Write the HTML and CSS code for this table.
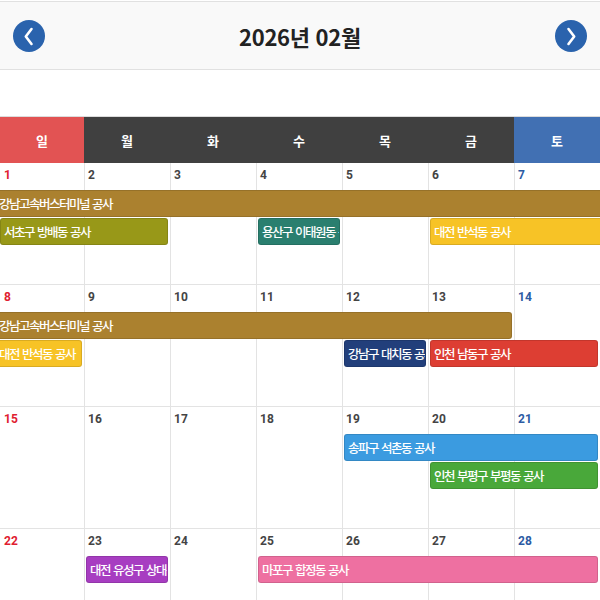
FILE: index.html
```html
<!DOCTYPE html>
<html lang="ko">
<head>
<meta charset="utf-8">
<link rel="stylesheet" href="styles.css">
</head>
<body>
<header class="topbar">
  <button class="nav-btn" aria-label="이전 달">
    <svg width="32" height="32" viewBox="0 0 32 32"><circle cx="16" cy="16" r="16" fill="#2a63ad"/><path d="M18.5 9 L12.8 16.5 L18.5 24" fill="none" stroke="#fff" stroke-width="2.6" stroke-linecap="round" stroke-linejoin="round"/></svg>
  </button>
  <h1 class="title">2026년 02월</h1>
  <button class="nav-btn" aria-label="다음 달">
    <svg width="32" height="32" viewBox="0 0 32 32"><circle cx="16" cy="16" r="16" fill="#2a63ad"/><path d="M13.5 9 L19.2 16.5 L13.5 24" fill="none" stroke="#fff" stroke-width="2.6" stroke-linecap="round" stroke-linejoin="round"/></svg>
  </button>
</header>

<section class="calendar">
  <div class="dow">
    <div class="dow-cell sun">일</div>
    <div class="dow-cell">월</div>
    <div class="dow-cell">화</div>
    <div class="dow-cell">수</div>
    <div class="dow-cell">목</div>
    <div class="dow-cell">금</div>
    <div class="dow-cell sat">토</div>
  </div>

  <div class="week">
    <div class="cells">
      <div class="cell"><span class="num sun">1</span></div>
      <div class="cell"><span class="num">2</span></div>
      <div class="cell"><span class="num">3</span></div>
      <div class="cell"><span class="num">4</span></div>
      <div class="cell"><span class="num">5</span></div>
      <div class="cell"><span class="num">6</span></div>
      <div class="cell"><span class="num sat">7</span></div>
    </div>
    <div class="events">
      <div class="ev gold cont-l cont-r c1-8 r1">강남고속버스터미널 공사</div>
      <div class="ev olive c1-3 r2">서초구 방배동 공사</div>
      <div class="ev teal c4-5 r2">용산구 이태원동 공사</div>
      <div class="ev yellow cont-r c6-8 r2">대전 반석동 공사</div>
    </div>
  </div>

  <div class="week">
    <div class="cells">
      <div class="cell"><span class="num sun">8</span></div>
      <div class="cell"><span class="num">9</span></div>
      <div class="cell"><span class="num">10</span></div>
      <div class="cell"><span class="num">11</span></div>
      <div class="cell"><span class="num">12</span></div>
      <div class="cell"><span class="num">13</span></div>
      <div class="cell"><span class="num sat">14</span></div>
    </div>
    <div class="events">
      <div class="ev gold cont-l c1-7 r1">강남고속버스터미널 공사</div>
      <div class="ev yellow cont-l c1-2 r2">대전 반석동 공사</div>
      <div class="ev navy c5-6 r2">강남구 대치동 공사</div>
      <div class="ev red c6-8 r2">인천 남동구 공사</div>
    </div>
  </div>

  <div class="week">
    <div class="cells">
      <div class="cell"><span class="num sun">15</span></div>
      <div class="cell"><span class="num">16</span></div>
      <div class="cell"><span class="num">17</span></div>
      <div class="cell"><span class="num">18</span></div>
      <div class="cell"><span class="num">19</span></div>
      <div class="cell"><span class="num">20</span></div>
      <div class="cell"><span class="num sat">21</span></div>
    </div>
    <div class="events">
      <div class="ev blue c5-8 r1">송파구 석촌동 공사</div>
      <div class="ev green c6-8 r2">인천 부평구 부평동 공사</div>
    </div>
  </div>

  <div class="week">
    <div class="cells">
      <div class="cell"><span class="num sun">22</span></div>
      <div class="cell"><span class="num">23</span></div>
      <div class="cell"><span class="num">24</span></div>
      <div class="cell"><span class="num">25</span></div>
      <div class="cell"><span class="num">26</span></div>
      <div class="cell"><span class="num">27</span></div>
      <div class="cell"><span class="num sat">28</span></div>
    </div>
    <div class="events">
      <div class="ev purple c2-3 r1">대전 유성구 상대동 공사</div>
      <div class="ev pink c4-8 r1">마포구 합정동 공사</div>
    </div>
  </div>
</section>
</body>
</html>
```

FILE: styles.css
```css
* { box-sizing: border-box; }

html, body {
  margin: 0;
  padding: 0;
  background: #fff;
  font-family: "Noto Sans CJK KR", "Noto Sans", sans-serif;
  overflow: hidden;
}

.topbar {
  margin-top: 1px;
  height: 69px;
  border-top: 1px solid #e1e1e1;
  border-bottom: 1px solid #e1e1e1;
  background: #f9f9f9;
  display: flex;
  align-items: center;
  justify-content: space-between;
  padding: 0 13px;
}

.nav-btn {
  border: 0;
  padding: 0;
  margin: 0;
  background: none;
  width: 32px;
  height: 32px;
  display: block;
  cursor: pointer;
}
.nav-btn svg { display: block; }

.title {
  margin: 0;
  font-size: 22px;
  font-weight: 700;
  color: #222;
  letter-spacing: -0.3px;
}

.calendar {
  margin-top: 46px;
  border-top: 1px solid #dcdcdc;
}

.dow {
  display: grid;
  grid-template-columns: 84px repeat(6, 86px);
  height: 46px;
  background: #404040;
}

.dow-cell {
  display: flex;
  align-items: center;
  justify-content: center;
  color: #fff;
  font-weight: 700;
  font-size: 13px;
}
.dow-cell.sun { background: #e25353; }
.dow-cell.sat { background: #4170b3; }

.week {
  position: relative;
  height: 122px;
  border-bottom: 1px solid #e3e3e3;
}

.cells {
  display: grid;
  grid-template-columns: 84px repeat(6, 86px);
  height: 100%;
}

.cell {
  border-left: 1px solid #e3e3e3;
  padding: 1px 0 0 3px;
  line-height: 16px;
}
.cell:first-child { border-left: 0; }

.num {
  font-family: "Roboto", "Noto Sans", sans-serif;
  font-size: 12px;
  font-weight: 700;
  color: #444;
  line-height: 16px;
}
.cell:first-child .num { padding-left: 1px; }
.num.sun { color: #e0202f; }
.num.sat { color: #2c5ba3; }

.events {
  position: absolute;
  top: 27px;
  left: 0;
  right: 0;
  display: grid;
  grid-template-columns: 84px repeat(6, 86px);
  grid-auto-rows: 27px;
  row-gap: 1px;
}

.ev {
  margin: 0 2px;
  border-radius: 3px;
  border: 1px solid rgba(0, 0, 0, 0.12);
  color: #fff;
  font-size: 12.5px;
  font-weight: 500;
  letter-spacing: -1.5px;
  word-spacing: 1px;
  line-height: 25px;
  padding-left: 3px;
  white-space: nowrap;
  overflow: hidden;
}

.cont-l { margin-left: 0; border-top-left-radius: 0; border-bottom-left-radius: 0; border-left: 0; padding-left: 0; text-indent: -1px; }
.cont-r { margin-right: 0; border-top-right-radius: 0; border-bottom-right-radius: 0; border-right: 0; }

.r1 { grid-row: 1; }
.r2 { grid-row: 2; }

.c1-8 { grid-column: 1 / 8; }
.c1-7 { grid-column: 1 / 7; }
.c1-3 { grid-column: 1 / 3; }
.c1-2 { grid-column: 1 / 2; }
.c2-3 { grid-column: 2 / 3; }
.c4-5 { grid-column: 4 / 5; }
.c4-8 { grid-column: 4 / 8; }
.c5-6 { grid-column: 5 / 6; }
.c5-8 { grid-column: 5 / 8; }
.c6-8 { grid-column: 6 / 8; }

.c1-3.olive { margin-left: 0; }

.gold   { background: #ab812f; }
.olive  { background: #989818; }
.teal   { background: #2a7f6f; }
.yellow { background: #f7c326; }
.navy   { background: #223f7b; }
.red    { background: #dd3e33; }
.blue   { background: #3b9be0; }
.green  { background: #49a83a; }
.purple { background: #a73dc1; }
.pink   { background: #ee70a1; }
```
